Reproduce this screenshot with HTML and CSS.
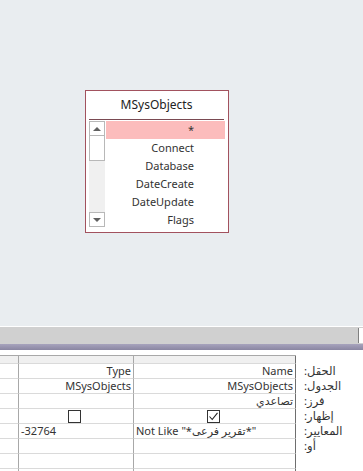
FILE: index.html
```html
<html lang="ar">

<head>
    <title>Query Design</title>
    <link rel="stylesheet" href="styles.css">
</head>

<body>
    <div class="design">
        <div class="tbl">
            <div class="tbl-title">MSysObjects</div>
            <div class="tbl-body">
                <div class="vscroll">
                    <div class="sbtn"><span class="arr up"></span></div>
                    <div class="thumb"></div>
                    <div class="track"></div>
                    <div class="sbtn"><span class="arr down"></span></div>
                </div>
                <div class="fields">
                    <div class="field sel">*</div>
                    <div class="field">Connect</div>
                    <div class="field">Database</div>
                    <div class="field">DateCreate</div>
                    <div class="field">DateUpdate</div>
                    <div class="field">Flags</div>
                </div>
            </div>
        </div>
    </div>
    <div class="edge"></div>
    <div class="hscroll">
        <div class="hs-end"></div>
    </div>
    <div class="splitter"></div>
    <div class="lower">
        <div class="qbe">
            <div class="c c1 head"></div><div class="c c2 head"></div><div class="c c3 head"></div>
            <div class="c c1"></div><div class="c c2 r">Type</div><div class="c c3 r">Name</div>
            <div class="c c1"></div><div class="c c2 r">MSysObjects</div><div class="c c3 r">MSysObjects</div>
            <div class="c c1"></div><div class="c c2"></div><div class="c c3 r">تصاعدي</div>
            <div class="c c1"></div>
            <div class="c c2 mid"><span class="chk"></span></div>
            <div class="c c3 mid">
                <span class="chk">
                    <svg width="11" height="11" viewBox="0 0 11 11"><polyline points="1.5,5.5 4.2,8.5 9.5,1.8" fill="none" stroke="#222" stroke-width="1.1"/></svg>
                </span>
            </div>
            <div class="c c1"></div><div class="c c2">-32764</div><div class="c c3">Not Like "*تقرير فرعى*"</div>
            <div class="c c1"></div><div class="c c2"></div><div class="c c3"></div>
            <div class="c c1"></div><div class="c c2"></div><div class="c c3"></div>
            <div class="c c1"></div><div class="c c2"></div><div class="c c3"></div>
        </div>
        <div class="labels">
            <div class="lbl" dir="rtl">الحقل:</div>
            <div class="lbl" dir="rtl">الجدول:</div>
            <div class="lbl" dir="rtl">فرز:</div>
            <div class="lbl" dir="rtl">إظهار:</div>
            <div class="lbl" dir="rtl">المعايير:</div>
            <div class="lbl" dir="rtl">أو:</div>
        </div>
    </div>
</body>

</html>
```
FILE: styles.css
```css
body {
    margin: 0;
    width: 363px;
    height: 471px;
    overflow: hidden;
    font-family: 'Noto Sans', 'DejaVu Sans', sans-serif;
    font-size: 11px;
    color: #222;
    background: white;
}

.design {
    height: 326px;
    background: #e9edf0;
    padding: 90px 0 0 85px;
    box-sizing: border-box;
}

.tbl {
    width: 144px;
    height: 143px;
    box-sizing: border-box;
    background: white;
    border: 1px solid #a2525e;
    padding: 0 3px 4px 3px;
}

.tbl-title {
    height: 28px;
    line-height: 28px;
    text-align: center;
    font-size: 12px;
    border-bottom: 1px solid #7a4a52;
    margin-right: 1px;
}

.tbl-body {
    display: flex;
    padding-top: 1px;
}

.vscroll {
    width: 16px;
    height: 106px;
    display: flex;
    flex-direction: column;
    background: #f0f0f0;
}

.sbtn {
    height: 15px;
    box-sizing: border-box;
    border: 1px solid #b8b8b8;
    background: white;
    display: flex;
    align-items: center;
    justify-content: center;
}

.thumb {
    height: 24px;
    border: 1px solid #b8b8b8;
    border-top: none;
    background: white;
}

.track {
    flex: 1;
}

.arr {
    width: 0;
    height: 0;
    border-left: 4px solid transparent;
    border-right: 4px solid transparent;
}

.arr.up {
    border-bottom: 4px solid #606060;
}

.arr.down {
    border-top: 4px solid #606060;
}

.fields {
    flex: 1;
    margin-left: 1px;
}

.field {
    height: 18px;
    line-height: 18px;
    text-align: right;
    padding-right: 31px;
    color: #333;
}

.field.sel {
    background: #fcbcbc;
}

.edge {
    height: 1px;
    background: white;
}

.hscroll {
    height: 17px;
    background: #d0d0d0;
    display: flex;
    justify-content: flex-end;
    align-items: center;
}

.hs-end {
    width: 4px;
    height: 15px;
    background: white;
    border-left: 1px solid #808080;
}

.splitter {
    height: 6px;
    background: linear-gradient(#a7a3bd, #8a86a2);
}

.lower {
    display: flex;
    padding-top: 5px;
}

.qbe {
    display: grid;
    grid-template-columns: 19px 115px 162px;
    grid-auto-rows: 15px;
    grid-template-rows: 8px;
    border-top: 1px solid #a8a8a8;
    width: 296px;
}

.c {
    box-sizing: border-box;
    border-bottom: 1px solid #dadada;
    border-right: 1px solid #a8a8a8;
    padding: 0 2px 0 2px;
    line-height: 14px;
    white-space: nowrap;
    overflow: hidden;
    color: #333;
}

.c.head {
    background: #f0f0f0;
}

.c3 {
    border-right-color: #6e6e6e;
}

.r {
    text-align: right;
}

.mid {
    display: flex;
    justify-content: center;
    align-items: center;
    padding-right: 5px;
}

.chk {
    width: 13px;
    height: 13px;
    box-sizing: border-box;
    border: 1px solid #333;
    background: white;
    display: flex;
    align-items: center;
    justify-content: center;
}

.labels {
    padding: 9px 0 0 8px;
}

.lbl {
    height: 15px;
    line-height: 14px;
    text-align: left;
    width: fit-content;
    color: #333;
    font-size: 11.5px;
}
```
